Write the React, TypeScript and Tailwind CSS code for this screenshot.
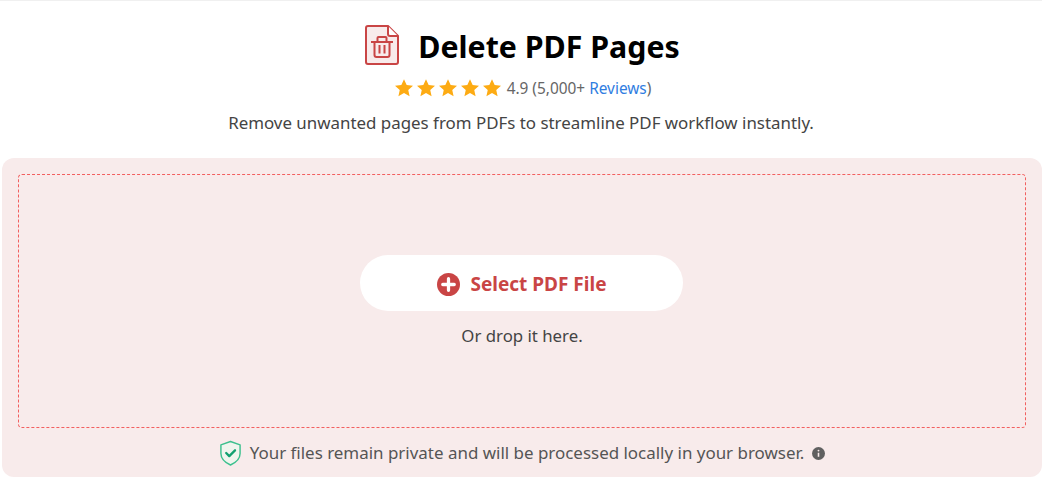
import React from "react"

const font = { fontFamily: '"Noto Sans", "Open Sans", sans-serif' }

const Star = () => (
  <svg viewBox="0 0 24 24" className="w-[20px] h-[20px] fill-[#fdab13]">
    <path d="M12 1.5l3.2 7 7.6.8-5.700 5.100 1.600 7.500L12 18.100l-6.700 3.800 1.600-7.500L1.200 9.300l7.600-.8z" />
  </svg>
)

const FileTrash = () => (
  <svg viewBox="0 0 34 40" className="w-[34px] h-[40px] -mt-[4px]" fill="none" stroke="#c94545">
    <path d="M3 1h20l10 10v26a2 2 0 0 1-2 2H3a2 2 0 0 1-2-2V3a2 2 0 0 1 2-2z" fill="#f8ebeb" strokeWidth="2" />
    <path d="M23 1v8a2 2 0 0 0 2 2h8" fill="#fff" strokeWidth="2" />
    <path d="M6 17h22M12.500 17v-4a1 1 0 0 1 1-1h7a1 1 0 0 1 1 1v4M9.500 17v13a2 2 0 0 0 2 2h11a2 2 0 0 0 2-2V17M14.500 20v8.500M19.500 20v8.500" strokeWidth="2" />
  </svg>
)

const PlusCircle = () => (
  <svg viewBox="0 0 24 24" className="w-[23px] h-[23px]">
    <circle cx="12" cy="12" r="12" fill="#c94545" />
    <path d="M12 6v12M6 12h12" stroke="#fff" strokeWidth="3.400" strokeLinecap="round" />
  </svg>
)

const Shield = () => (
  <svg viewBox="0 0 24 27" className="w-[23px] h-[26px]" fill="none">
    <path d="M12 1.500l10 3.500v9c0 5.500-4.500 9.500-10 12-5.500-2.500-10-6.500-10-12V5z" fill="#f0f5ee" stroke="#3cc08e" strokeWidth="1.500" strokeLinejoin="round" />
    <path d="M7.500 13.500l3.200 3.200 6-6" stroke="#12a070" strokeWidth="2.400" strokeLinecap="round" strokeLinejoin="round" />
  </svg>
)

const Info = () => (
  <svg viewBox="0 0 14 14" className="w-[13px] h-[13px]">
    <circle cx="7" cy="7" r="7" fill="#606060" />
    <path d="M7 6.200v4.300" stroke="#f8ebeb" strokeWidth="1.700" />
    <circle cx="7" cy="3.900" r="1" fill="#f8ebeb" />
  </svg>
)

export default function App() {
  return (
    <div className="h-[477px] bg-white border-t border-[#f0f0f0] overflow-hidden" style={font}>
      <div className="flex flex-col items-center">
        <div className="flex items-center gap-[19px] mt-[23px] h-[46px] ml-[3px]">
          <FileTrash />
          <h1 className="text-[30.300px] font-bold text-black leading-[46px]">Delete PDF Pages</h1>
        </div>
        <div className="flex items-center mt-[6px] h-[24px] text-[15.400px] text-[#666666] ml-[3px]">
          <div className="flex gap-[2px] mr-[5px]">
            <Star />
            <Star />
            <Star />
            <Star />
            <Star />
          </div>
          <span className="pt-[2px]">
            4.9 (5,000+&nbsp;<span className="text-[#2f7de1]">Reviews</span>)
          </span>
        </div>
        <p className="mt-[11px] text-[16.900px] leading-[24px] text-[#444444]">
          Remove unwanted pages from PDFs to streamline PDF workflow instantly.
        </p>
      </div>
      <div className="ml-[2px] mt-[23px] h-[319px] rounded-[12px] bg-[#f8ebeb] px-[16px] pt-[16px] flex flex-col">
        <div className="h-[254px] shrink-0 border border-dashed border-[#f25f5f] rounded-[4px] flex flex-col items-center pt-[80px]">
          <button className="w-[323px] h-[56px] shrink-0 mr-[2px] pt-[3px] pl-[2px] rounded-[28px] bg-white flex items-center justify-center gap-[10px] text-[19px] font-bold text-[#c94545]">
            <PlusCircle />
            Select PDF File
          </button>
          <p className="mt-[12px] text-[16.800px] leading-[26px] text-[#444444]">Or drop it here.</p>
        </div>
        <div className="flex items-center justify-center mt-[12px] gap-[8px] text-[16.950px] leading-[26px] text-[#555555]">
          <Shield />
          <span>Your files remain private and will be processed locally in your browser.</span>
          <Info />
        </div>
      </div>
    </div>
  )
}
